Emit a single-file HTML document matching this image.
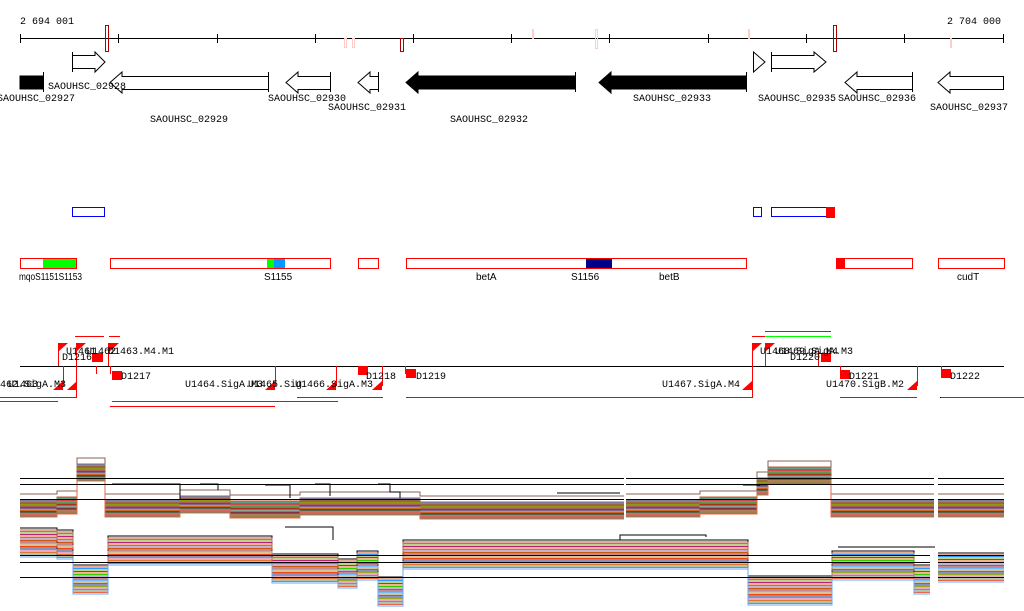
<!DOCTYPE html>
<html><head><meta charset="utf-8"><style>
html,body{margin:0;padding:0;background:#fff;}
svg{display:block;font-family:"Liberation Mono","DejaVu Sans Mono",monospace;}
</style></head><body>
<svg width="1024" height="611" viewBox="0 0 1024 611" xmlns="http://www.w3.org/2000/svg">
<g font-size="10" fill="#000">
<text x="20" y="24">2 694 001</text>
<text x="1001" y="24" text-anchor="end">2 704 000</text>
</g>
<g stroke="#000" stroke-width="1" shape-rendering="crispEdges">
<line x1="20" y1="38.5" x2="1004" y2="38.5"/>
<path d="M20.5 34V43M118.5 34V43M217.5 34V43M315.5 34V43M413.5 34V43M511.5 34V43M609.5 34V43M708.5 34V43M806.5 34V43M904.5 34V43M1003.5 34V43"/>
</g>
<g fill="none" shape-rendering="crispEdges">
<rect x="105.5" y="25.5" width="3" height="26" stroke="#a00"/>
<rect x="400.5" y="38.5" width="3" height="13" stroke="#a00"/>
<rect x="833.5" y="25.5" width="3" height="26" stroke="#a00"/>
<g stroke="#fcc">
<rect x="344.5" y="38.5" width="2" height="9"/><rect x="352.5" y="38.5" width="2" height="9"/>
<rect x="532.5" y="29.5" width="1" height="9"/><rect x="595.5" y="29.5" width="2" height="19"/>
<rect x="748.5" y="29.5" width="1" height="9"/><rect x="950.5" y="38.5" width="1" height="9"/>
</g>
</g>
<g stroke="#000" stroke-width="1" fill="#fff">
<path d="M72.5 55.5H95V52L105 62L95 72V68.5H72.5Z"/>
<path d="M72.5 52V72" fill="none"/>
<path d="M753.5 52L765 62L753.5 72Z"/>
<path d="M771.5 55.5H814V52L826 62L814 72V68.5H771.5Z"/><path d="M771.5 52V72" fill="none"/>
<rect x="20" y="76" width="23" height="13" fill="#000"/><path d="M43.5 72V92" fill="none"/>
<path d="M268.5 76.5H122V72L110 82.5L122 93V89.5H268.5Z"/><path d="M268.5 72V92" fill="none"/>
<path d="M330.5 76.5H298V72L286 82.5L298 93V89.5H330.5Z"/><path d="M330.5 72V92" fill="none"/>
<path d="M378.5 76.5H370V72L358 82.5L370 93V89.5H378.5Z"/><path d="M378.5 72V92" fill="none"/>
<path d="M575 76H418V72L406 82.5L418 93V89H575Z" fill="#000"/><path d="M575.5 72V92" fill="none"/>
<path d="M746 76H611V72L599 82.5L611 93V89H746Z" fill="#000"/><path d="M746.5 72V92" fill="none"/>
<path d="M912.5 76.5H857V72L845 82.5L857 93V89.5H912.5Z"/><path d="M912.5 72V92" fill="none"/>
<path d="M1003.5 76.5H950V72L938 82.5L950 93V89.5H1003.5Z"/>
</g>
<g font-size="10" fill="#000">
<text x="48" y="89">SAOUHSC_02928</text>
<text x="-3" y="101">SAOUHSC_02927</text>
<text x="150" y="122">SAOUHSC_02929</text>
<text x="268" y="101">SAOUHSC_02930</text>
<text x="328" y="110">SAOUHSC_02931</text>
<text x="450" y="122">SAOUHSC_02932</text>
<text x="633" y="101">SAOUHSC_02933</text>
<text x="758" y="101">SAOUHSC_02935</text>
<text x="838" y="101">SAOUHSC_02936</text>
<text x="930" y="110">SAOUHSC_02937</text>
</g>
<g fill="none" stroke="#00f" shape-rendering="crispEdges">
<rect x="72.5" y="207.5" width="32" height="9"/>
<rect x="753.5" y="207.5" width="8" height="9"/>
<rect x="771.5" y="207.5" width="55" height="9"/>
</g>
<rect x="826" y="207" width="9" height="11" fill="#f00"/>
<g shape-rendering="crispEdges">
<rect x="43" y="258" width="34" height="11" fill="#0f0"/>
<rect x="267" y="258" width="7" height="11" fill="#0f0"/>
<rect x="274" y="258" width="11" height="11" fill="#09f"/>
<rect x="586" y="258" width="26" height="11" fill="#008"/>
<rect x="836" y="258" width="9" height="11" fill="#f00"/>
<g fill="none" stroke="#f00">
<rect x="20.5" y="258.5" width="56" height="10"/>
<rect x="110.5" y="258.5" width="220" height="10"/>
<rect x="358.5" y="258.5" width="20" height="10"/>
<rect x="406.5" y="258.5" width="340" height="10"/>
<rect x="836.5" y="258.5" width="76" height="10"/>
<rect x="938.5" y="258.5" width="66" height="10"/>
</g>
</g>
<g font-size="10" fill="#000" font-family="'Liberation Sans Narrow','Liberation Sans',sans-serif">
<text x="19" y="280" textLength="63" lengthAdjust="spacingAndGlyphs">mqoS1151S1153</text>
<text x="264" y="280">S1155</text>
<text x="476" y="280">betA</text>
<text x="571" y="280">S1156</text>
<text x="659" y="280">betB</text>
<text x="957" y="280">cudT</text>
</g>
<g stroke="#000" shape-rendering="crispEdges">
<line x1="20" y1="366.5" x2="1004" y2="366.5"/>
<line x1="940" y1="397.5" x2="1024" y2="397.5"/>
</g>
<g stroke="#f00" shape-rendering="crispEdges">
<path d="M0 397.5H77M0 401.5H58M112 401.5H338M110 406.5H275M297 397.5H383M406 397.5H752M840 397.5H917M941 397.5H1024M75 336.5H104M109 336.5H120M752 336.5H765M765 331.5H831"/>
<path d="M765 336.5H831" stroke="#0f0"/>
<path d="M58.5 343V366M76.5 343V398M108.5 343V366M275.5 366V386M336.5 366V386M382.5 366V386M405.5 366V374M752.5 343V398M765.5 343V366M818.5 352V366M840.5 366V374M917.5 366V386M941.5 366V374M63.5 366V386M96.5 366V374M110.5 366V374"/>
</g>
<g fill="#f00">
<path d="M58 343H68L58 352Z"/><path d="M76 343H86L76 352Z"/><path d="M109 343H119L109 352Z"/><path d="M752 343H762L752 352Z"/><path d="M765 343H775L765 352Z"/>
<path d="M63 381V390H53Z"/><path d="M77 381V390H67Z"/><path d="M275 381V390H265Z"/><path d="M336 381V390H326Z"/><path d="M382 381V390H372Z"/><path d="M752 381V390H742Z"/><path d="M917 381V390H907Z"/>
<rect x="92" y="353" width="11" height="9"/><rect x="112" y="371" width="10" height="9"/><rect x="358" y="366" width="10" height="9"/><rect x="406" y="369" width="10" height="9"/>
<rect x="821" y="353" width="10" height="9"/><rect x="840" y="370" width="10" height="9"/><rect x="941" y="369" width="10" height="9"/>
</g>
<g font-size="10" fill="#000">
<text x="66" y="354">U1461</text><text x="86" y="354">U1462</text><text x="108" y="354">D1463.M4.M1</text>
<text x="62" y="360">D1216</text>
<text x="121" y="379">D1217</text>
<text x="0" y="387">462.SigA.M3</text><text x="8" y="387">U1463</text>
<text x="185" y="387">U1464.SigA.M3</text><text x="248" y="387">U1465.Sig</text><text x="295" y="387">U1466.SigA.M3</text>
<text x="366" y="379">D1218</text><text x="416" y="379">D1219</text>
<text x="662" y="387">U1467.SigA.M4</text>
<text x="760" y="354">U1468.SigA.M4</text><text x="775" y="354">U1469.SigA.M3</text>
<text x="790" y="360">D1220</text>
<text x="849" y="379">D1221</text>
<text x="826" y="387">U1470.SigB.M2</text>
<text x="950" y="379">D1222</text>
</g>
<defs>
<path id="pt" fill="none" d="M20 500H57V497H77V464H105V500H180V496H230V501H300V498H420V502H624M626 500H700V497H757V478H768V467H831V500H934M938 500H1004"/>
<path id="pb" fill="none" d="M20 530H57V532H73V567H108V538H272V556H338V561H357V553H378V579H403V542H748V578H832V553H914V567H930M938 555H1004"/>
</defs>
<g stroke-width="1" shape-rendering="crispEdges">
<use href="#pt" stroke="#865" y="-6"/>
<use href="#pt" stroke="#c53" y="0"/><use href="#pt" stroke="#39f" y="1"/><use href="#pt" stroke="#7a1" y="2"/><use href="#pt" stroke="#b27" y="3"/>
<use href="#pt" stroke="#e62" y="4"/><use href="#pt" stroke="#3c0" y="5"/><use href="#pt" stroke="#86a" y="6"/><use href="#pt" stroke="#c51" y="7"/>
<use href="#pt" stroke="#812" y="8"/><use href="#pt" stroke="#7bf" y="9"/><use href="#pt" stroke="#a83" y="10"/><use href="#pt" stroke="#e41" y="11"/>
<use href="#pt" stroke="#127" y="12"/><use href="#pt" stroke="#9a2" y="13"/><use href="#pt" stroke="#c58" y="14"/><use href="#pt" stroke="#d73" y="15"/>
<use href="#pt" stroke="#586" y="16"/><use href="#pt" stroke="#e64" y="17"/>
<use href="#pb" stroke="#000" y="-2"/><use href="#pb" stroke="#c53" y="0"/><use href="#pb" stroke="#39f" y="1.5"/><use href="#pb" stroke="#7a1" y="3"/><use href="#pb" stroke="#b27" y="4.5"/>
<use href="#pb" stroke="#e62" y="6"/><use href="#pb" stroke="#3c0" y="7.5"/><use href="#pb" stroke="#86a" y="9"/><use href="#pb" stroke="#c51" y="10.5"/>
<use href="#pb" stroke="#812" y="12"/><use href="#pb" stroke="#7bf" y="13.5"/><use href="#pb" stroke="#a83" y="15"/><use href="#pb" stroke="#e41" y="16.5"/>
<use href="#pb" stroke="#127" y="18"/><use href="#pb" stroke="#9a2" y="19.5"/><use href="#pb" stroke="#c58" y="21"/><use href="#pb" stroke="#d73" y="22.5"/>
<use href="#pb" stroke="#586" y="24"/><use href="#pb" stroke="#e64" y="25.5"/><use href="#pb" stroke="#6af" y="27"/>
</g>
<g stroke="#000" shape-rendering="crispEdges">
<path d="M20 478.5H624M626 478.5H934M938 478.5H1004M20 484.5H624M626 484.5H934M938 484.5H1004M20 499.5H624M626 499.5H934M938 499.5H1004"/>
<path d="M20 555.5H930M938 555.5H1004M20 562.5H930M938 562.5H1004M20 577.5H930M938 577.5H1004"/>
<path fill="none" d="M112 484H180V500M200 484H218V490M265 485H290V498M315 484H330V496M378 484H390V492H400V498M285 527H333V540M838 547H935M407 540H620V535H706V537M557 493H620M743 485H760"/>
</g>
</svg>
</body></html>
